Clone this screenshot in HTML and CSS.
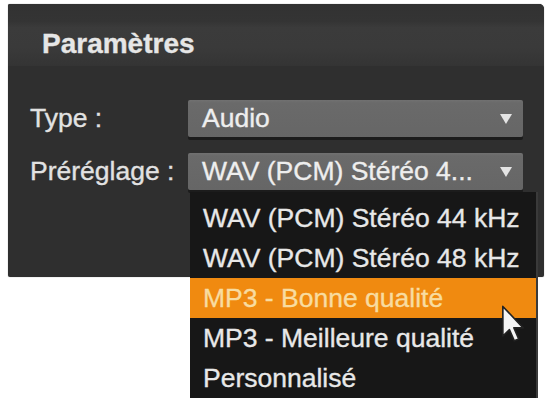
FILE: index.html
```html
<!DOCTYPE html>
<html lang="fr">
<head>
<meta charset="utf-8">
<title>Paramètres</title>
<link rel="stylesheet" href="styles.css">
</head>
<body>
<div class="panel">
  <div class="header">Paramètres</div>
  <div class="body">
    <div class="row">
      <div class="label">Type :</div>
      <div class="select">
        <span class="value">Audio</span>
        <span class="arrow"></span>
      </div>
    </div>
    <div class="row">
      <div class="label">Préréglage :</div>
      <div class="select open">
        <span class="value">WAV (PCM) Stéréo 4...</span>
        <span class="arrow"></span>
        <ul class="menu">
          <li>WAV (PCM) Stéréo 44 kHz</li>
          <li>WAV (PCM) Stéréo 48 kHz</li>
          <li class="hover">MP3 - Bonne qualité</li>
          <li>MP3 - Meilleure qualité</li>
          <li>Personnalisé</li>
        </ul>
        <svg class="cursor" viewBox="0 0 13 21" width="24" height="40">
          <path d="M1 1 L1 17 L4.6 13.6 L7.2 19.6 L9.6 18.6 L7 12.6 L12 12.6 Z" fill="#f4f4f4" stroke="#222" stroke-width="0.9" stroke-linejoin="round"/>
        </svg>
      </div>
    </div>
  </div>
</div>
</body>
</html>
```
FILE: styles.css
```css
html, body {
  margin: 0;
  padding: 0;
  background: #ffffff;
}
html {
  height: 401px;
}
body {
  font-family: "Liberation Sans", Arial, sans-serif;
  color: #ececec;
  padding: 4px 0 0 8px;
  height: 401px;
  box-sizing: border-box;
  -webkit-text-stroke: 0.35px currentColor;
}
.panel {
  position: relative;
  width: 536px;
  height: 273px;
  background: #2f2f2f;
  border-radius: 2px 5px 2px 2px;
  box-shadow: 0 0 1px rgba(0,0,0,0.5);
}
.header {
  height: 62px;
  box-sizing: border-box;
  padding: 24px 0 0 34px;
  line-height: 32px;
  font-size: 28px;
  font-weight: bold;
  color: #e6e6e6;
  background: linear-gradient(#323232 0%, #343434 28%, #3b3b3b 38%, #3a3a3a 70%, #343434 100%);
  border-radius: 2px 5px 0 0;
}
.body {
  padding: 34px 21px 0 22px;
  display: flex;
  flex-direction: column;
  gap: 16px;
}
.row {
  display: flex;
  align-items: center;
}
.label {
  width: 158px;
  font-size: 26.5px;
  color: #e2e2e2;
}
.select {
  position: relative;
  flex: 1;
  height: 37px;
  box-sizing: border-box;
  padding: 0 11px 0 14px;
  display: flex;
  align-items: center;
  justify-content: space-between;
  background: linear-gradient(#717171 0, #6a6a6a 8%, #666666 100%);
  box-shadow: 0 3px 0 #1c1c1c;
  border-radius: 2px;
  font-size: 26.5px;
  color: #eeeeee;
}
.arrow {
  width: 0;
  height: 0;
  border-left: 6px solid transparent;
  border-right: 6px solid transparent;
  border-top: 10px solid #e4e4e4;
}
.menu {
  position: absolute;
  left: 2px;
  top: 39px;
  width: 348px;
  margin: 0;
  padding: 6px 0 0 0;
  box-sizing: border-box;
  height: 206px;
  list-style: none;
  background: #171717;
  border-right: 2px solid #3a3a3a;
  z-index: 2;
}
.menu li {
  height: 40px;
  box-sizing: border-box;
  padding-left: 13px;
  display: flex;
  align-items: center;
  font-size: 26.5px;
  color: #e8e8e8;
  white-space: nowrap;
}
.menu li.hover {
  background: #f08a10;
  color: #f8dca0;
}
.cursor {
  position: absolute;
  left: 313px;
  top: 151px;
  z-index: 3;
}
```
